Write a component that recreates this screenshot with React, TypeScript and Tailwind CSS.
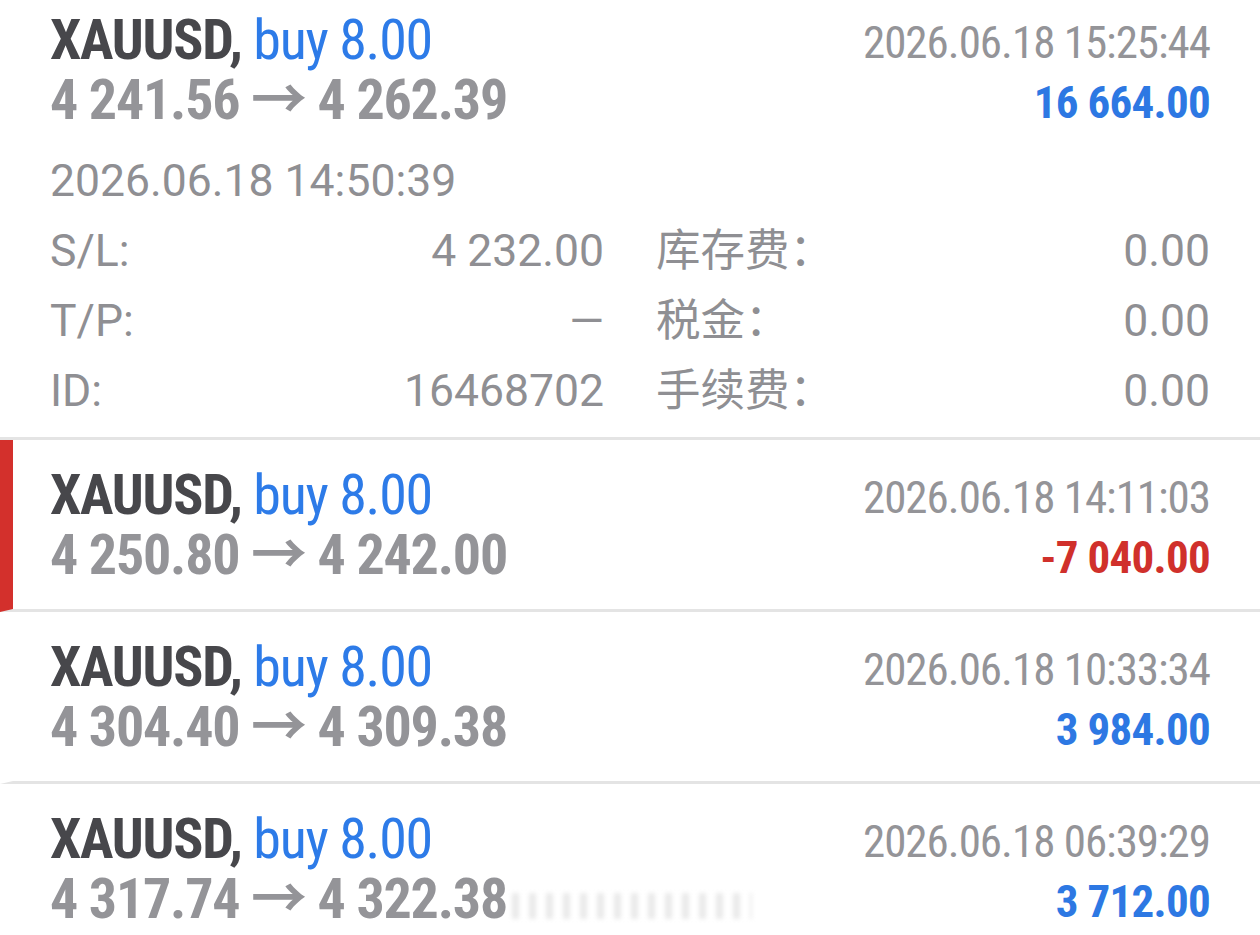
import React from "react";

type Trade = {
  symbol: string;
  side: string;
  volume: string;
  open: string;
  close: string;
  time: string;
  profit: string;
  loss?: boolean;
};

const trades: Trade[] = [
  { symbol: "XAUUSD", side: "buy", volume: "8.00", open: "4 241.56", close: "4 262.39", time: "2026.06.18 15:25:44", profit: "16 664.00" },
  { symbol: "XAUUSD", side: "buy", volume: "8.00", open: "4 250.80", close: "4 242.00", time: "2026.06.18 14:11:03", profit: "-7 040.00", loss: true },
  { symbol: "XAUUSD", side: "buy", volume: "8.00", open: "4 304.40", close: "4 309.38", time: "2026.06.18 10:33:34", profit: "3 984.00" },
  { symbol: "XAUUSD", side: "buy", volume: "8.00", open: "4 317.74", close: "4 322.38", time: "2026.06.18 06:39:29", profit: "3 712.00" },
];

const font = "[font-family:Roboto,'Noto_Sans_CJK_SC',sans-serif]";

function TradeHead({ t }: { t: Trade }) {
  return (
    <div className={`${font} font-stretch-[75%] flex justify-between`}>
      <div className="text-[56px] leading-[60px]">
        <div className="tracking-[-1.25px]">
          <span className="font-bold text-[#47474b]">{t.symbol},</span>{" "}
          <span className="font-normal text-[#2d7be8]">
            {t.side} {t.volume}
          </span>
        </div>
        <div className="tracking-[-1.2px] font-bold text-[#949498]">
          {t.open} → {t.close}
        </div>
      </div>
      <div className="flex flex-col items-end pt-[3px] leading-[60px] text-[45px]">
        <div className="tracking-[-1px] text-[#949498]">{t.time}</div>
        <div className={`tracking-[-0.7px] font-bold ${t.loss ? "text-[#d0302b]" : "text-[#2d78e3]"}`}>{t.profit}</div>
      </div>
    </div>
  );
}

function Detail({ label, value }: { label: string; value: string }) {
  return (
    <div className="flex justify-between">
      <span>{label}</span>
      <span>{value}</span>
    </div>
  );
}

export default function App() {
  return (
    <div className="relative w-[1260px] h-[935px] overflow-hidden bg-white">
      {/* expanded trade */}
      <div className="pt-[10px] pl-[50px] pr-[50px] pb-[11px] border-b-[3px] border-[#e4e4e4]">
        <TradeHead t={trades[0]} />
        <div className={`${font} text-[44.5px] leading-[70px] text-[#8f8f93] mt-[13px]`}>
          <div>2026.06.18 14:50:39</div>
          <div className="grid grid-cols-2 gap-x-[52px]">
            <Detail label="S/L:" value="4 232.00" />
            <Detail label="库存费：" value="0.00" />
            <Detail label="T/P:" value="—" />
            <Detail label="税金：" value="0.00" />
            <Detail label="ID:" value="16468702" />
            <Detail label="手续费：" value="0.00" />
          </div>
        </div>
      </div>
      {trades.slice(1).map((t, i) => (
        <div
          key={i}
          className={`h-[172px] pt-[25px] pl-[37px] pr-[50px] border-l-[13px] border-b-[3px] border-b-[#e4e4e4] ${
            t.loss ? "border-l-[#d3302c]" : "border-l-transparent"
          }`}
        >
          <TradeHead t={t} />
        </div>
      ))}
      {/* faint watermark over the last row */}
      <div className="absolute left-[512px] top-[893px] w-[240px] h-[26px] opacity-60 blur-[2px] bg-[repeating-linear-gradient(90deg,#dcdcdc_0_7px,transparent_7px_17px)]" />
    </div>
  );
}
